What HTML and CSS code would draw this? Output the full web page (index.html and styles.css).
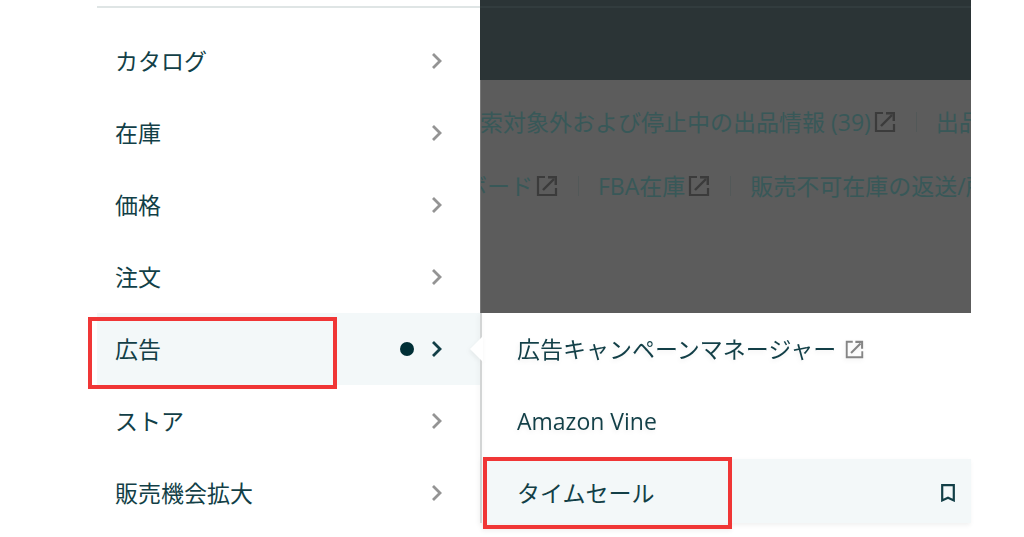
FILE: index.html
```
<!DOCTYPE html>
<html lang="ja">
<head>
    <meta charset="utf-8">
    <title>セラーセントラル</title>
    <link rel="stylesheet" href="styles.css">
</head>
<body>
    <svg width="0" height="0" class="icon-defs" aria-hidden="true">
        <symbol id="chevron" viewBox="0 0 12 18">
            <path d="M2 2 L9 9 L2 16" fill="none" stroke="currentColor" stroke-width="2.8"/>
        </symbol>
        <symbol id="external" viewBox="0 0 22 22">
            <path d="M9 2 H2 V20 H20 V13" fill="none" stroke="currentColor" stroke-width="2.2"/>
            <path d="M7 15 L18 4" fill="none" stroke="currentColor" stroke-width="2.4"/>
            <path d="M12 1 H21 V10 H18.6 V3.4 H12 Z" fill="currentColor"/>
        </symbol>
        <symbol id="bookmark" viewBox="0 0 14 18">
            <path d="M1.2 1.2 H12.8 V16.4 L7 13.8 L1.2 16.4 Z" fill="none" stroke="currentColor" stroke-width="2.2"/>
        </symbol>
    </svg>

    <div class="app">
        <nav class="sidebar">
            <ul class="menu">
                <li><a class="menu-item" href="#">カタログ<svg class="chevron"><use href="#chevron"/></svg></a></li>
                <li><a class="menu-item" href="#">在庫<svg class="chevron"><use href="#chevron"/></svg></a></li>
                <li><a class="menu-item" href="#">価格<svg class="chevron"><use href="#chevron"/></svg></a></li>
                <li><a class="menu-item" href="#">注文<svg class="chevron"><use href="#chevron"/></svg></a></li>
                <li>
                    <a class="menu-item active marked" href="#">広告<span class="dot"></span><svg class="chevron"><use href="#chevron"/></svg></a>
                </li>
                <li><a class="menu-item" href="#">ストア<svg class="chevron"><use href="#chevron"/></svg></a></li>
                <li><a class="menu-item" href="#">販売機会拡大<svg class="chevron"><use href="#chevron"/></svg></a></li>
            </ul>
        </nav>

        <div class="main">
            <header class="topbar"></header>
            <div class="dimmed">
                <div class="link-row first">
                    <a href="#">索対象外および停止中の出品情報 (39)<svg class="external"><use href="#external"/></svg></a>
                    <a href="#">出品</a>
                </div>
                <div class="link-row second">
                    <a href="#">ボード<svg class="external"><use href="#external"/></svg></a>
                    <a href="#">FBA在庫<svg class="external"><use href="#external"/></svg></a>
                    <a href="#">販売不可在庫の返送/所</a>
                </div>
            </div>
            <nav class="submenu">
                <ul class="menu">
                    <li><a class="menu-item" href="#">広告キャンペーンマネージャー<svg class="external small"><use href="#external"/></svg></a></li>
                    <li><a class="menu-item" href="#">Amazon Vine</a></li>
                    <li><a class="menu-item active marked" href="#">タイムセール<svg class="bookmark"><use href="#bookmark"/></svg></a></li>
                </ul>
            </nav>
        </div>
    </div>
</body>
</html>
```

FILE: styles.css
```
*, *::before, *::after {
    box-sizing: border-box;
}
body {
    margin: 0;
    min-height: 100vh;
    padding: 0 53px 0 97px;
    background: #fff;
    color: #123f47;
    font-family: "Open Sans", "Noto Sans CJK JP", sans-serif;
    font-size: 23px;
    line-height: 48px;
}
a {
    color: inherit;
    text-decoration: none;
}
svg {
    flex: none;
}
.icon-defs {
    position: absolute;
}
.app {
    display: grid;
    grid-template-columns: 383px minmax(0, 1fr);
}

/* left menu */
.sidebar {
    padding-top: 6px;
}
.sidebar .menu {
    border-top: 2px solid #dfe5e5;
    padding-top: 17px;
}
.menu {
    list-style: none;
    margin: 0;
    padding: 0;
}
.menu-item {
    position: relative;
    display: flex;
    align-items: center;
    padding: 12px 37px 12px 18px;
}
.menu li:last-child .menu-item {
    padding-bottom: 6px;
}
.menu-item.active {
    background: #f3f8f9;
}
.chevron {
    width: 12px;
    height: 18px;
    margin-left: auto;
    color: #949494;
}
.active .chevron {
    margin-left: 17px;
    color: #123f47;
}
.dot {
    width: 14px;
    height: 14px;
    margin-left: auto;
    border-radius: 50%;
    background: #002f36;
}

/* red frame over a menu item */
.marked::after {
    content: "";
    position: absolute;
    top: 4px;
    left: -9px;
    width: 249px;
    height: 72px;
    border: 4px solid #f03636;
}

/* page behind the menu */
.topbar {
    height: 80px;
    background: linear-gradient(#2b3436 6px, #323c3e 6px, #323c3e 8px, #2b3436 8px);
}
.dimmed {
    padding: 18px 0 87px;
    background: #5c5c5c;
    color: #385858;
    border-left: 1px solid #777;
    overflow: hidden;
}
.link-row {
    display: flex;
    margin-bottom: 16px;
    white-space: nowrap;
}
.link-row.first {
    margin-left: -1px;
}
.link-row.second {
    margin-left: -17px;
}
.link-row a {
    display: flex;
    align-items: center;
}
.link-row a + a::before {
    content: "";
    width: 1px;
    height: 20px;
    margin: 0 19px 0 20px;
    background: #525858;
}
.external {
    width: 22px;
    height: 22px;
    margin-left: 3px;
    color: #3b3b3b;
}
.external.small {
    width: 19px;
    height: 19px;
    margin-left: 9px;
    color: #858585;
}

/* flyout */
.submenu {
    position: relative;
    border-left: 2px solid #d3d5d5;
    filter: drop-shadow(-1px 2px 2px rgba(0, 0, 0, 0.06));
}
.submenu::before {
    content: "";
    position: absolute;
    top: 23px;
    left: -12px;
    width: 13px;
    height: 26px;
    background: #fff;
    clip-path: polygon(100% 0, 0 50%, 100% 100%);
}
.submenu .menu-item {
    padding-left: 35px;
    padding-right: 16px;
}
.submenu .menu-item.active {
    margin-top: 2px;
    padding-top: 10px;
}
.submenu .marked::after {
    top: -2px;
    left: 1px;
}
.bookmark {
    width: 14px;
    height: 18px;
    margin-left: auto;
}
```
